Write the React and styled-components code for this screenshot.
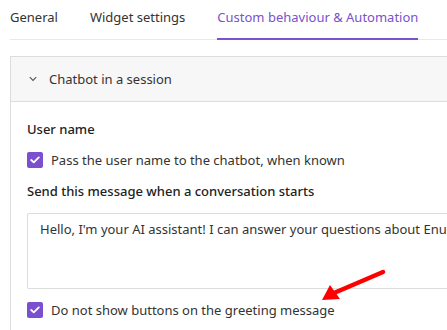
import React from "react";
import styled, { createGlobalStyle } from "styled-components";

const Global = createGlobalStyle`
  html, body { margin: 0; padding: 0; background: #fff; overflow: hidden; }
  body { font-family: "Noto Sans", "Open Sans", sans-serif; color: #333; }
`;

const Page = styled.div`
  position: relative;
  width: 560px;
  padding-left: 10px;
`;

const Tabs = styled.div`
  display: flex;
  gap: 32px;
  height: 40px;
  border-bottom: 1px solid #e8e8e8;
  box-sizing: border-box;
`;

const Tab = styled.div`
  font-size: 13px;
  line-height: 20px;
  padding-top: 7px;
  color: ${(p) => (p.$active ? "#7a52c9" : "#333")};
  box-sizing: border-box;
  border-bottom: 2px solid ${(p) => (p.$active ? "#7a52c9" : "transparent")};
  margin-bottom: -1px;
`;

const Panel = styled.div`
  margin-top: 16px;
  border: 1px solid #ddd;
  border-right: none;
  border-bottom: none;
`;

const PanelHeader = styled.div`
  display: flex;
  align-items: center;
  height: 45px;
  padding-bottom: 1px;
  box-sizing: border-box;
  background: #f7f7f7;
  border-bottom: 1px solid #ddd;
  padding-left: 18px;
  gap: 12px;
  font-size: 13px;
  color: #333;
`;

const PanelBody = styled.div`
  padding: 17px 0 12px 16px;
  display: flex;
  flex-direction: column;
`;

const Title = styled.div`
  font-size: 13px;
  line-height: 20px;
  font-weight: 500;
  color: #222;
  margin-top: ${(p) => p.$mt || 0}px;
`;

const CheckRow = styled.label`
  display: flex;
  align-items: center;
  gap: 8px;
  height: 20px;
  margin-top: 11px;
  font-size: 13px;
  color: #333;
`;

const Box = styled.span`
  width: 16px;
  height: 16px;
  border-radius: 2px;
  background: #7b4fd0;
  display: flex;
  align-items: center;
  justify-content: center;
`;

const TextArea = styled.div`
  margin-top: 12px;
  height: 76px;
  box-sizing: border-box;
  border: 1px solid #ddd;
  border-right: none;
  border-radius: 2px;
  padding: 5px 0 0 12px;
  font-size: 13px;
  line-height: 20px;
  color: #333;
  white-space: nowrap;
  overflow: hidden;
`;

const Arrow = styled.svg`
  position: absolute;
  left: 0;
  top: 0;
  pointer-events: none;
`;

const Check = () => (
  <Box>
    <svg width="10" height="8" viewBox="0 0 10 8">
      <path d="M1.2 4 L3.8 6.4 L8.8 1.4" fill="none" stroke="#fff" strokeWidth="1.8" strokeLinecap="round" strokeLinejoin="round" />
    </svg>
  </Box>
);

export default function App() {
  return (
    <>
      <Global />
      <Page>
        <Tabs>
          <Tab>General</Tab>
          <Tab>Widget settings</Tab>
          <Tab $active>Custom behaviour &amp; Automation</Tab>
        </Tabs>
        <Panel>
          <PanelHeader>
            <svg width="8" height="6" viewBox="0 0 8 6">
              <path d="M0.8 1.2 L4 4.4 L7.2 1.2" fill="none" stroke="#555" strokeWidth="1.1" />
            </svg>
            <span>Chatbot in a session</span>
          </PanelHeader>
          <PanelBody>
            <Title>User name</Title>
            <CheckRow>
              <Check />
              <span>Pass the user name to the chatbot, when known</span>
            </CheckRow>
            <Title $mt={11}>Send this message when a conversation starts</Title>
            <TextArea>Hello, I'm your AI assistant! I can answer your questions about Enumerate</TextArea>
            <CheckRow>
              <Check />
              <span>Do not show buttons on the greeting message</span>
            </CheckRow>
          </PanelBody>
        </Panel>
        <Arrow width="447" height="330" viewBox="0 0 447 330">
          <line x1="383" y1="272" x2="334" y2="293" stroke="#f00" strokeWidth="4.5" strokeLinecap="round" />
          <polygon points="322,300 330,285 340,299" fill="#f00" />
        </Arrow>
      </Page>
    </>
  );
}
